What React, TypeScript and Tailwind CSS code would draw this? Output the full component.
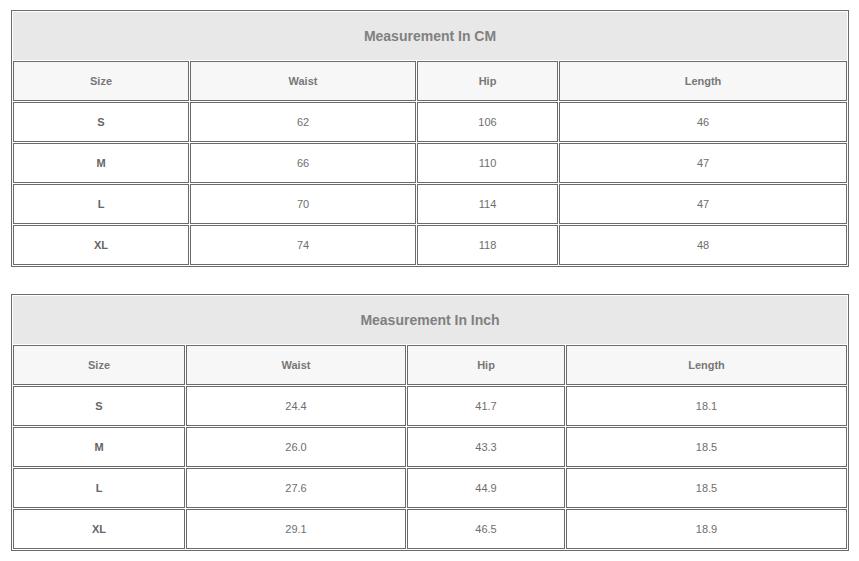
type Chart = {
  title: string
  cols: string[]
  rows: string[][]
}

const charts: Chart[] = [
  {
    title: 'Measurement In CM',
    cols: ['w-[176px]', 'w-[226px]', 'w-[141px]', 'w-[288px]'],
    rows: [
      ['S', '62', '106', '46'],
      ['M', '66', '110', '47'],
      ['L', '70', '114', '47'],
      ['XL', '74', '118', '48'],
    ],
  },
  {
    title: 'Measurement In Inch',
    cols: ['w-[172px]', 'w-[220px]', 'w-[158px]', 'w-[281px]'],
    rows: [
      ['S', '24.4', '41.7', '18.1'],
      ['M', '26.0', '43.3', '18.5'],
      ['L', '27.6', '44.9', '18.5'],
      ['XL', '29.1', '46.5', '18.9'],
    ],
  },
]

const headers = ['Size', 'Waist', 'Hip', 'Length']

function SizeTable({ chart }: { chart: Chart }) {
  return (
    <table className="w-[838px] table-fixed border-separate border-spacing-[1px] border border-[#6b6b6b] bg-white">
      <colgroup>
        {chart.cols.map((c, i) => (
          <col key={i} className={c} />
        ))}
      </colgroup>
      <tbody>
        {/* Title */}
        <tr>
          <td
            colSpan={4}
            className="h-[48px] bg-[#e8e8e8] text-center text-[14px] font-bold text-[#808080]"
          >
            {chart.title}
          </td>
        </tr>
        <tr>
          {headers.map(h => (
            <td
              key={h}
              className="h-[40px] border border-[#6b6b6b] bg-[#f7f7f7] text-center text-[11px] font-bold text-[#777]"
            >
              {h}
            </td>
          ))}
        </tr>
        {chart.rows.map(row => (
          <tr key={row[0]}>
            {row.map((cell, i) => (
              <td
                key={i}
                className={`h-[40px] border border-[#6b6b6b] text-center text-[11px] ${
                  i === 0 ? 'font-bold text-[#666]' : 'text-[#6e6e6e]'
                }`}
              >
                {cell}
              </td>
            ))}
          </tr>
        ))}
      </tbody>
    </table>
  )
}

export default function App() {
  return (
    <div className="min-h-[561px] w-[859px] bg-white pl-[11px] pt-[10px] font-['Liberation_Sans',Arial,sans-serif]">
      <div className="flex flex-col gap-[27px]">
        {charts.map(c => (
          <SizeTable key={c.title} chart={c} />
        ))}
      </div>
    </div>
  )
}
